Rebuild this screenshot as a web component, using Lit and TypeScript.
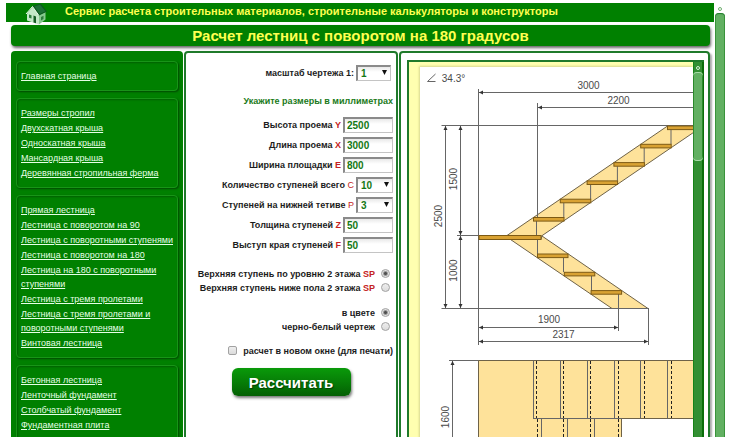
import { LitElement, html, css, svg } from "lit";
import { customElement } from "lit/decorators.js";

const MENU: string[][] = [
  ["Главная страница"],
  ["Размеры стропил", "Двухскатная крыша", "Односкатная крыша", "Мансардная крыша", "Деревянная стропильная ферма"],
  [
    "Прямая лестница",
    "Лестница с поворотом на 90",
    "Лестница с поворотными ступенями",
    "Лестница с поворотом на 180",
    "Лестница на 180 с поворотными ступенями",
    "Лестница с тремя пролетами",
    "Лестница с тремя пролетами и поворотными ступенями",
    "Винтовая лестница",
  ],
  ["Бетонная лестница", "Ленточный фундамент", "Столбчатый фундамент", "Фундаментная плита", "Бетонные кольца"],
];

@customElement("side-menu")
class SideMenu extends LitElement {
  static styles = css`
    :host {
      display: flex;
      flex-direction: column;
      gap: 7px;
      padding: 10px 5px;
      background: #008000;
      border-radius: 4px;
      box-sizing: border-box;
    }
    .group {
      display: flex;
      flex-direction: column;
      align-items: flex-start;
      gap: 1px;
      padding: 7px 4px;
      border: 1px solid #189418;
      border-radius: 4px;
      box-shadow: 1px 1px 2px #004800, inset 1px 1px 2px #006000;
    }
    .link {
      color: #e6ffe6;
      font-size: 9px;
      line-height: 14px;
    }
  `;
  render() {
    return MENU.map(
      (group) => html`<nav class="group">${group.map((t) => html`<a class="link" href="#">${t}</a>`)}</nav>`
    );
  }
}

@customElement("stair-form")
class StairForm extends LitElement {
  static styles = css`
    :host {
      display: block;
      box-sizing: border-box;
      border: 2px solid #1f7a2b;
      border-radius: 4px;
      padding: 12px 3px;
      font-size: 9px;
      font-weight: bold;
      color: #1c1c1c;
    }
    .form {
      display: flex;
      flex-direction: column;
      align-items: flex-end;
    }
    .row {
      display: flex;
      align-items: center;
      justify-content: flex-end;
      gap: 2px;
      height: 16px;
    }
    .scale {
      padding-right: 2px;
    }
    .hint {
      margin: 14px 0 10px;
      line-height: 12px;
      color: #1a7a1a;
    }
    .sizes {
      display: flex;
      flex-direction: column;
      align-items: flex-end;
      gap: 4px;
    }
    .mark {
      color: #c42222;
    }
    .light {
      font-weight: normal;
    }
    .text,
    .select {
      box-sizing: border-box;
      height: 16px;
      margin: 0;
      border: 1px solid #c4c4c4;
      border-top: 2px solid #8a8a8a;
      border-left: 2px solid #8a8a8a;
      border-radius: 0;
      background: linear-gradient(#e9e9e9, #ffffff 5px);
      color: #147814;
      font: bold 10px "Liberation Sans", Arial, sans-serif;
      outline: none;
    }
    .text {
      width: 50px;
      padding: 0 2px;
    }
    .pick {
      position: relative;
      display: flex;
      width: 37px;
    }
    .scale .pick {
      width: 35px;
    }
    .select {
      width: 100%;
      padding: 0 3px;
      appearance: none;
    }
    .arrow {
      position: absolute;
      right: 4px;
      top: 5px;
      width: 5px;
      height: 5px;
      pointer-events: none;
    }
    .choices {
      display: flex;
      flex-direction: column;
      align-items: flex-end;
      padding-right: 3px;
    }
    .sizes + .choices {
      margin: 14px 0 11px;
    }
    .choice {
      display: flex;
      align-items: center;
      gap: 6px;
      line-height: 14px;
      height: 14px;
    }
    .radio,
    .check {
      appearance: none;
      box-sizing: border-box;
      width: 9px;
      height: 9px;
      margin: 0 0 2px;
      border: 1px solid #a2a2a2;
      background: linear-gradient(#eeeeee, #dcdcdc);
    }
    .radio {
      border-radius: 50%;
    }
    .radio:checked {
      background: radial-gradient(circle, #505050 0 1px, #e2e2e2 3px);
    }
    .check {
      border-radius: 2px;
    }
    .window {
      margin: 10px 0;
      gap: 6px;
    }
    .submit {
      align-self: center;
      width: 119px;
      height: 28px;
      padding: 0;
      border: 0;
      border-radius: 6px;
      background: linear-gradient(#0a9a0a, #067806 60%, #045f04);
      box-shadow: 1px 2px 3px #777777;
      color: #ffffff;
      font: bold 15px "Liberation Sans", Arial, sans-serif;
      text-shadow: 1px 1px 1px #033f03;
    }
  `;
  private arrow = html`<svg class="arrow" viewBox="0 0 5 5"><path d="M0 0H5L2.5 5Z" fill="#111" /></svg>`;
  private text(id: string, label: string, mark: string, value: string) {
    return html`<div class="row">
      <label for=${id}>${label} <span class="mark">${mark}</span></label>
      <input class="text" type="text" id=${id} .value=${value} />
    </div>`;
  }
  private pick(id: string, label: string, mark: string, value: string) {
    return html`<div class="row ${mark ? "" : "scale"}">
      <label for=${id}>${label} ${mark ? html`<span class="mark light">${mark}</span>` : ""}</label>
      <span class="pick"><select class="select" id=${id}><option>${value}</option></select>${this.arrow}</span>
    </div>`;
  }
  private radio(name: string, label: string, mark: string, checked: boolean) {
    return html`<label class="choice">
      <span>${label} ${mark ? html`<span class="mark">${mark}</span>` : ""}</span>
      <input class="radio" type="radio" name=${name} ?checked=${checked} />
    </label>`;
  }
  render() {
    return html`<form class="form">
      ${this.pick("scale", "масштаб чертежа 1:", "", "1")}
      <div class="hint">Укажите размеры в миллиметрах</div>
      <div class="sizes">
        ${this.text("y", "Высота проема", "Y", "2500")}
        ${this.text("x", "Длина проема", "X", "3000")}
        ${this.text("e", "Ширина площадки", "E", "800")}
        ${this.pick("c", "Количество ступеней всего", "C", "10")}
        ${this.pick("p", "Ступеней на нижней тетиве", "P", "3")}
        ${this.text("z", "Толщина ступеней", "Z", "50")}
        ${this.text("f", "Выступ края ступеней", "F", "50")}
      </div>
      <div class="choices">
        ${this.radio("top", "Верхняя ступень по уровню 2 этажа", "SP", true)}
        ${this.radio("top", "Верхняя ступень ниже пола 2 этажа", "SP", false)}
      </div>
      <div class="choices">
        ${this.radio("color", "в цвете", "", true)}
        ${this.radio("color", "черно-белый чертеж", "", false)}
      </div>
      <label class="choice window"><input class="check" type="checkbox" /><span>расчет в новом окне (для печати)</span></label>
      <button class="submit" type="button">Рассчитать</button>
    </form>`;
  }
}

type Dim = [number, number, number, number];
const arrowHead = (x: number, y: number, dx: number, dy: number) =>
  svg`<path class="head" d="M${x} ${y}L${x - dx * 4 - dy * 2} ${y - dy * 4 - dx * 2}L${x - dx * 4 + dy * 2} ${y - dy * 4 + dx * 2}Z"/>`;
const dimension = ([x1, y1, x2, y2]: Dim) => {
  const dx = Math.sign(x2 - x1);
  const dy = Math.sign(y2 - y1);
  return svg`<path class="line" d="M${x1} ${y1}L${x2} ${y2}"/>${arrowHead(x1, y1, -dx, -dy)}${arrowHead(x2, y2, dx, dy)}`;
};

@customElement("stair-drawing")
class StairDrawing extends LitElement {
  static styles = css`
    :host {
      display: block;
      background: #ffffff;
      overflow: hidden;
      box-shadow: -1px -1px 2px #d8d890;
    }
    .sheet {
      display: block;
      width: 320px;
      height: 430px;
    }
    .line {
      fill: none;
      stroke: #666666;
    }
    .head {
      fill: #333333;
    }
    .wood {
      fill: #fee29a;
      stroke: #6e6248;
    }
    .tread {
      fill: #d9a233;
      stroke: #7d5a14;
    }
    .dash {
      fill: none;
      stroke: #222222;
      stroke-dasharray: 3 2;
    }
    .num {
      fill: #4a4a4a;
      font: 10px "Liberation Sans", Arial, sans-serif;
      text-anchor: middle;
    }
  `;
  render() {
    const dims: Dim[] = [
      [479, 92.5, 720, 92.5],
      [538, 107.5, 720, 107.5],
      [445.5, 126, 445.5, 308],
      [460.5, 126, 460.5, 235],
      [460.5, 236, 460.5, 308],
      [479, 327.5, 618, 327.5],
      [479, 341.5, 648, 341.5],
      [452.5, 361, 452.5, 476],
    ];
    const upper = [0, 1, 2, 3, 4, 5].map((i) => ({ x: 533.5 + i * 26.8, y: 217.5 - i * 18.3 }));
    const lower = [0, 1, 2].map((i) => ({ x: 537.5 + i * 26.8, y: 254 + i * 18.3 }));
    const tread = (s: { x: number; y: number }) =>
      svg`<rect class="tread" x=${s.x} y=${s.y} width="30.5" height="3.6"/>`;
    const vertical = (x: number, y1: number, y2: number, cls = "line") =>
      svg`<path class=${cls} d="M${x} ${y1}V${y2}"/>`;
    const num = (x: number, y: number, t: string) => svg`<text class="num" x=${x} y=${y}>${t}</text>`;
    const side = (x: number, y: number, t: string) =>
      svg`<text class="num" transform="translate(${x} ${y}) rotate(-90)">${t}</text>`;
    return html`<svg class="sheet" viewBox="420 67 320 430">
      <path class="line" d="M435.5 74L427.5 81.5H435.5" />
      ${num(453.5, 82, "34.3°")}
      <path class="wood" d="M507 235.5L667.5 126H703L541.5 236Z" />
      <path class="wood" d="M510.5 239.5H541L542 236L648 308.5H612Z" />
      <path class="line" d="M441.5 125.5H720M457 235.5H480M441.5 308.5H648M449 360.5H480" />
      ${vertical(478.5, 89, 345)} ${vertical(537.5, 103, 217)} ${vertical(536.5, 221, 235)}
      ${upper.slice(0, 5).map((s) => vertical(s.x + 30.3, s.y - 14.7, s.y))}
      ${vertical(537.5, 240, 254)} ${vertical(563.5, 258, 272)} ${vertical(591.5, 276, 291)}
      ${vertical(618.5, 294, 331)} ${vertical(648.5, 308, 345)}
      ${upper.map(tread)} ${lower.map(tread)}
      <rect class="tread" x="479" y="235.5" width="62" height="4" />
      <path class="wood" d="M478.5 360.5H720V418.5H621.5V480H478.5Z" />
      <path class="line" d="M533 418.5H622" />
      ${[533.5, 560.5, 587.5, 614.5, 640.5, 667.5].map((x) => vertical(x, 360.5, 418.5))}
      ${[536.5, 563.5, 590.5, 618.5, 644.5, 671.5].map((x) => vertical(x, 361, 418, "dash"))}
      ${[541.5, 567.5, 594.5].map((x) => vertical(x, 418.5, 480))}
      ${[537.5, 563.5, 590.5, 618.5].map((x) => vertical(x, 419, 480, "dash"))}
      ${dims.map(dimension)}
      ${num(588.5, 89, "3000")} ${num(618.5, 104, "2200")} ${num(549, 323, "1900")} ${num(563.5, 338, "2317")}
      ${side(456.5, 179, "1500")} ${side(442, 216, "2500")} ${side(456.5, 270.5, "1000")} ${side(449, 417, "1600")}
    </svg>`;
  }
}

@customElement("app-root")
class AppRoot extends LitElement {
  static styles = css`
    :host {
      display: grid;
      grid-template-columns: minmax(0, 1fr) 10px;
      gap: 1px;
      height: 100vh;
      box-sizing: border-box;
      padding: 3px 5px 0 6px;
      overflow: hidden;
      background: #ffffff;
      font-family: "Liberation Sans", Arial, sans-serif;
    }
    .page {
      display: flex;
      flex-direction: column;
      min-height: 0;
    }
    .top {
      display: flex;
      align-items: flex-start;
      gap: 18px;
      height: 19px;
      flex: none;
      padding-left: 19px;
      background: #008000;
    }
    .house {
      flex: none;
      width: 22px;
      height: 22px;
    }
    .service {
      color: #ffff50;
      font-size: 11px;
      font-weight: bold;
      line-height: 17px;
      white-space: nowrap;
    }
    .title {
      flex: none;
      margin: 3px 4px 5px 5px;
      border-radius: 4px;
      background: #008000;
      box-shadow: 1px 2px 3px #666666;
      color: #ffff50;
      font-size: 15px;
      font-weight: bold;
      line-height: 21px;
      text-align: center;
    }
    .columns {
      display: grid;
      grid-template-columns: 172px 214px minmax(0, 1fr);
      gap: 1px;
      margin: 0 4px 0 5px;
    }
    .result {
      border: 2px solid #1f7a2b;
      border-radius: 4px;
      box-shadow: 2px 2px 2px #aaaaaa;
      padding: 7px 4px 7px 6px;
      min-width: 0;
    }
    .view {
      display: grid;
      grid-template-columns: minmax(0, 1fr) 11px;
      border: 2px solid #1f7a2b;
      border-right: 0;
      background: #ffffb0;
    }
    .paper {
      margin: 5px 0 0 11px;
    }
    .bar {
      display: flex;
      flex-direction: column;
    }
    .inner {
      background: linear-gradient(90deg, #178317 0 1px, #338f33 1px 9px, #0a6e0a 9px);
    }
    .up {
      display: block;
      flex: none;
      width: 10px;
      height: 10px;
    }
    .inner .thumb {
      height: 89px;
      margin-right: 1px;
      border-radius: 4px;
      background: linear-gradient(90deg, #2a8a2a 0 1px, #62b062 1px 9px, #2a8a2a 9px);
      box-shadow: inset 0 1px 0 #a8dca8, inset 0 -1px 0 #a8dca8;
    }
    .outer .thumb {
      flex: 1;
      border-radius: 4px 4px 0 0;
      background: linear-gradient(90deg, #3c963c 0 1px, #62b062 1px 9px, #3c963c 9px);
      box-shadow: inset 0 1px 1px #1f7a2b;
    }
  `;
  render() {
    return html`
      <div class="page">
        <header class="top">
          <svg class="house" viewBox="0 0 22 22">
            <path d="M2 10.5L7.500 4L14 12V21.500L2 17.500Z" fill="#c4e8c8" />
            <path d="M14 12L20.500 9V16.500L14 21.500Z" fill="#86c78e" />
            <path d="M7.500 3L15.500 0.500L22 8.500L14 12.500Z" fill="#0c5a20" />
            <path d="M9.500 3.500L15 1.800L20.500 8.200L14.500 11Z" fill="#1d7136" />
            <path d="M1 11L7.500 3.500L13.500 12" fill="none" stroke="#ecfaec" />
            <path d="M8.500 12.500L11 13.500V20.300L8.500 19.500Z" fill="#155c24" />
            <path d="M4 11.500L6.500 12.200V15.500L4 14.800Z" fill="#2c7c3b" />
            <path d="M16 14L18.500 12.800V16L16 17.500Z" fill="#2c7c3b" />
          </svg>
          <span class="service">Сервис расчета строительных материалов, строительные калькуляторы и конструкторы</span>
        </header>
        <h1 class="title">Расчет лестниц с поворотом на 180 градусов</h1>
        <main class="columns">
          <side-menu></side-menu>
          <stair-form></stair-form>
          <section class="result">
            <div class="view">
              <stair-drawing class="paper"></stair-drawing>
              <div class="bar inner">
                <svg class="up" viewBox="0 0 10 10"><circle cx="5" cy="6" r="1.500" fill="none" stroke="#d8f2d8" /></svg>
                <div class="thumb"></div>
              </div>
            </div>
          </section>
        </main>
      </div>
      <div class="bar outer">
        <svg class="up" viewBox="0 0 10 10"><circle cx="5" cy="6" r="1.500" fill="none" stroke="#6fae6f" /></svg>
        <div class="thumb"></div>
      </div>
    `;
  }
}
